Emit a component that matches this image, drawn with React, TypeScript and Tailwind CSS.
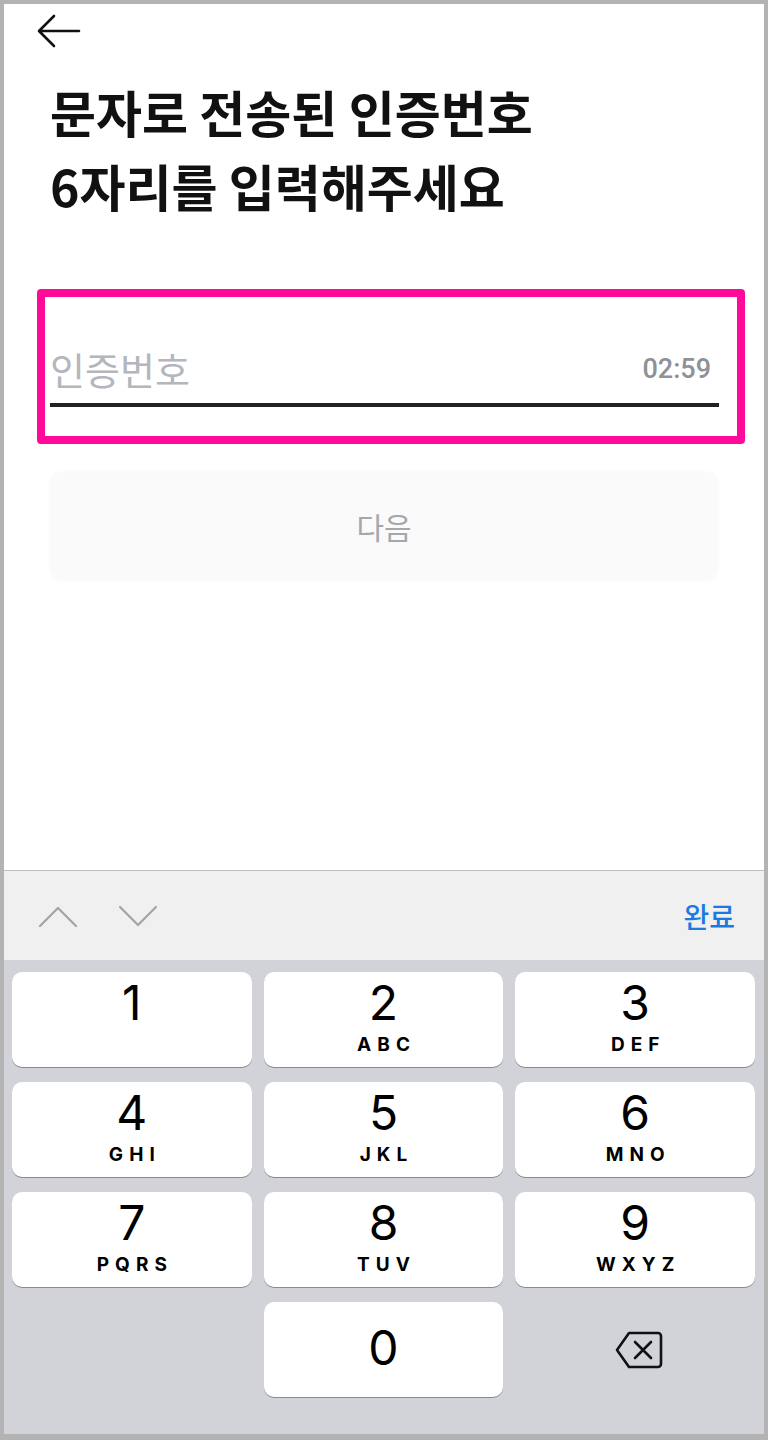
import React from "react"

const FONT = { fontFamily: '"Noto Sans CJK KR", "Noto Sans", sans-serif' }
const DIGIT_FONT = { fontFamily: 'Inter, "Noto Sans", sans-serif' }

const keys: { digit: string; letters?: string }[] = [
  { digit: "1", letters: "" },
  { digit: "2", letters: "ABC" },
  { digit: "3", letters: "DEF" },
  { digit: "4", letters: "GHI" },
  { digit: "5", letters: "JKL" },
  { digit: "6", letters: "MNO" },
  { digit: "7", letters: "PQRS" },
  { digit: "8", letters: "TUV" },
  { digit: "9", letters: "WXYZ" },
]

function BackArrow() {
  return (
    <svg width="44" height="34" viewBox="0 0 44 34" fill="none">
      <path d="M42 17H3M17 2L2 17l15 15" stroke="#111" strokeWidth="2.6" strokeLinecap="round" strokeLinejoin="round" />
    </svg>
  )
}

function Chevron({ up }: { up?: boolean }) {
  return (
    <svg width="40" height="24" viewBox="0 0 40 24" fill="none">
      <path
        d={up ? "M2 22L20 4l18 18" : "M2 3l18 18L38 3"}
        stroke="#a3a3a8"
        strokeWidth="2.2"
        strokeLinecap="round"
        strokeLinejoin="round"
      />
    </svg>
  )
}

function BackspaceIcon() {
  return (
    <svg width="50" height="42" viewBox="0 0 50 42" fill="none">
      <path
        d="M15 4h29a3 3 0 013 3v28a3 3 0 01-3 3H15L3 21z"
        stroke="#111"
        strokeWidth="2.6"
        strokeLinejoin="round"
      />
      <path d="M21 13l16 16M37 13L21 29" stroke="#111" strokeWidth="2.6" strokeLinecap="round" />
    </svg>
  )
}

function Key({ digit, letters }: { digit: string; letters?: string }) {
  return (
    <div className="flex h-[95px] flex-col items-center rounded-[10px] bg-white pt-[7px] shadow-[0_1px_0_#898a8e]">
      <span className="text-[48px] leading-[48px] font-normal text-black" style={DIGIT_FONT}>
        {digit}
      </span>
      {letters ? (
        <span
          className="mt-[8px] pl-[0.32em] text-[19px] leading-[20px] font-bold tracking-[0.32em] text-black"
          style={DIGIT_FONT}
        >
          {letters}
        </span>
      ) : null}
    </div>
  )
}

export default function App() {
  return (
    <div className="flex h-[1440px] w-[768px] flex-col bg-[#b3b3b3] pt-[4px] pr-[4px] pb-[6px] pl-[4px]" style={FONT}>
      <div className="flex flex-1 flex-col bg-white">
        {/* header */}
        <div className="flex h-[58px] items-start pt-[10px] pl-[33px]">
          <BackArrow />
        </div>

        <h1 className="mt-[12px] pl-[46px] text-[50px] leading-[74px] font-bold text-[#111]">
          문자로 전송된 인증번호
          <br />
          6자리를 입력해주세요
        </h1>

        {/* input */}
        <div className="mt-[67px] pr-[19px] pl-[33px]">
          <div className="h-[155px] rounded-[4px] border-[8px] border-[#ff0a9b] pt-[51px] pr-[18px] pl-[5px]">
            <div className="flex h-[42px] items-center justify-between">
              <span className="text-[38px] leading-[42px] font-normal text-[#b3b6bc]">인증번호</span>
              <span
                className="mr-[8px] text-[27px] font-medium text-[#8e9198]"
                style={{ fontFamily: 'Roboto, "Liberation Sans", sans-serif' }}
              >
                02:59
              </span>
            </div>
            <div className="mt-[13px] h-[4px] bg-[#222]" />
          </div>
        </div>

        <div className="mt-[28px] ml-[46px] flex h-[108px] w-[668px] items-center justify-center rounded-[12px] bg-[#fafafb] shadow-[0_0_4px_rgba(0,0,0,0.03)]">
          <span className="text-[30px] font-normal text-[#a4a7ad]">다음</span>
        </div>
      </div>

      {/* keyboard toolbar */}
      <div className="flex h-[90px] items-center justify-between border-t border-[#bdbdc0] bg-[#f0f0f1] pr-[29px] pl-[34px]">
        <div className="flex items-center gap-[40px]">
          <Chevron up />
          <Chevron />
        </div>
        <span className="text-[28px] font-medium text-[#1a7ae0]">완료</span>
      </div>

      {/* keypad */}
      <div className="flex-none bg-[#d2d3d9] pt-[12px] pr-[9px] pb-[37px] pl-[8px]">
        <div className="grid grid-cols-3 gap-x-[12px] gap-y-[15px]">
          {keys.map((k) => (
            <Key key={k.digit} digit={k.digit} letters={k.letters} />
          ))}
          <div className="h-[95px]" />
          <div className="flex h-[95px] items-center justify-center rounded-[10px] bg-white pb-[4px] shadow-[0_1px_0_#898a8e]">
            <span className="text-[48px] leading-[48px] font-normal text-black" style={DIGIT_FONT}>
              0
            </span>
          </div>
          <div className="flex h-[95px] items-center justify-center pl-[8px]">
            <BackspaceIcon />
          </div>
        </div>
      </div>
    </div>
  )
}
